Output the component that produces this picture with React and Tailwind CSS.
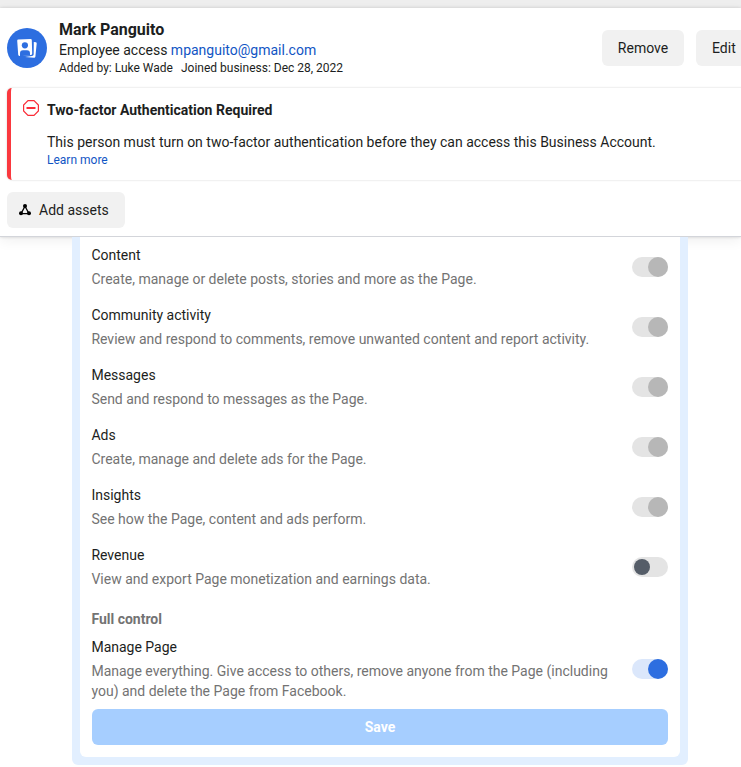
import React from "react";

const permissions = [
  ["Content", "Create, manage or delete posts, stories and more as the Page.", "locked"],
  ["Community activity", "Review and respond to comments, remove unwanted content and report activity.", "locked"],
  ["Messages", "Send and respond to messages as the Page.", "locked"],
  ["Ads", "Create, manage and delete ads for the Page.", "locked"],
  ["Insights", "See how the Page, content and ads perform.", "locked"],
  ["Revenue", "View and export Page monetization and earnings data.", "off"],
];

const tracks = {
  locked: "justify-end bg-[#e4e4e4]",
  off: "justify-start bg-[#e4e4e4] pl-0.5",
  on: "justify-end bg-[#dbe7fb]",
};
const knobs = {
  locked: "size-5 bg-[#b7b7b7]",
  off: "size-4 bg-[#555d68]",
  on: "size-5 bg-[#2d6ee0]",
};

function Toggle({ state }) {
  return (
    <button className={`flex h-5 w-9 shrink-0 items-center rounded-full ${tracks[state]}`}>
      <span className={`rounded-full ${knobs[state]}`} />
    </button>
  );
}

function Permission({ title, text, state }) {
  return (
    <div className="flex items-center justify-between">
      <div className="-ml-[0.6px] flex w-[530px] flex-col gap-1">
        <div className="text-[#1c1e21]">{title}</div>
        <div className="text-[#737373]">{text}</div>
      </div>
      <Toggle state={state} />
    </div>
  );
}

function PersonIcon() {
  return (
    <svg className="size-10 shrink-0" viewBox="0 0 40 40">
      <circle cx="20" cy="20" r="20" fill="#2d6ee0" />
      <path d="M11.2 11.6 L23.7 11 Q24.7 11 24.8 12 L25.2 25.6 Q25.2 26.8 24 26.9 L12.4 27.9 Q11.3 27.9 11.2 26.8 L10.2 12.8 Q10.2 11.7 11.2 11.6Z" fill="#fff" />
      <circle cx="17.9" cy="17.3" r="3.1" fill="#2d6ee0" />
      <path d="M13 28.2 V25.4 Q13 22.2 16 22.2 H20 Q23 22.2 23 25.2 V27.2 Z" fill="#2d6ee0" />
      <path d="M26.8 14 L29 14.3 Q29.8 14.5 29.7 15.4 L28.4 28.4 Q28.2 29.8 27 29.7 L18 29 L25 28 Q26.6 27.8 26.7 26.2Z" fill="#fff" />
    </svg>
  );
}

export default function App() {
  return (
    <div className="h-[767px] w-[741px] overflow-hidden bg-white text-sm leading-5 text-[#1c1e21] [font-family:Roboto,'Liberation_Sans',sans-serif]">
      <div className="h-2 bg-[#eeeeee]" />
      <header className="relative z-10 flex h-[229px] flex-col border-b border-[#d3d5da] bg-white shadow-[0_0_3px_rgba(0,0,0,0.16),0_4px_12px_rgba(0,0,0,0.06)]">
        <div className="flex h-20 shrink-0 items-center pl-[7px]">
          <PersonIcon />
          <div className="ml-3 w-[543px] shrink-0 pb-px">
            <h1 className="text-base leading-5 font-bold">Mark Panguito</h1>
            <p className="leading-5">
              Employee access <a className="text-[#1155c4]">mpanguito@gmail.com</a>
            </p>
            <p className="flex gap-2 text-xs leading-4">
              <span>Added by: Luke Wade</span>
              <span>Joined business: Dec 28, 2022</span>
            </p>
          </div>
          <button className="h-9 w-[82px] shrink-0 rounded-md bg-[#f1f1f1]">Remove</button>
          <button className="ml-3 h-9 w-[72px] shrink-0 rounded-md bg-[#f1f1f1] pl-4 text-left">Edit</button>
        </div>
        <section className="ml-[7px] flex h-[92px] w-[760px] shrink-0 rounded-[5px] border-l-4 border-[#fa383e] bg-white pt-3 shadow-[0_0_2px_rgba(0,0,0,0.22)]">
          <svg className="ml-3 size-4 shrink-0" viewBox="0 0 16 16" fill="none" stroke="#fa2d38">
            <path d="M5 .6H11L15.4 5V11L11 15.4H5L.6 11V5Z" strokeWidth="1.2" />
            <path d="M3.5 8H12.5" strokeWidth="2" />
          </svg>
          <div className="ml-2">
            <h2 className="leading-5 font-bold">Two-factor Authentication Required</h2>
            <p className="mt-3 leading-5">This person must turn on two-factor authentication before they can access this Business Account.</p>
            <a className="block text-xs leading-4 text-[#1155c4]">Learn more</a>
          </div>
        </section>
        <button className="mt-3 ml-[7px] flex h-9 w-[118px] shrink-0 items-center gap-2 rounded-md bg-[#f1f1f1] pl-3">
          <svg className="size-3" viewBox="0 0 12 12">
            <path d="M6 2.3 L2 9.6 H10Z" fill="none" stroke="#050505" strokeWidth="1.3" />
            <circle cx="6" cy="2" r="2" />
            <circle cx="2" cy="9.3" r="2" />
            <circle cx="10" cy="9.3" r="2" />
          </svg>
          <span>Add assets</span>
        </button>
      </header>
      <main className="relative z-20 ml-[72px] h-[528px] w-[616px] rounded-b-md bg-[#e2efff] px-2 pb-2">
        <div className="flex h-[520px] flex-col gap-4 rounded-b-md bg-white px-3 pt-2">
          {permissions.map(([title, text, state]) => (
            <Permission key={title} title={title} text={text} state={state} />
          ))}
          <section className="mt-1">
            <h3 className="-ml-[0.6px] mb-2 font-bold text-[#737373]">Full control</h3>
            <Permission
              title="Manage Page"
              text="Manage everything. Give access to others, remove anyone from the Page (including you) and delete the Page from Facebook."
              state="on"
            />
            <button className="mt-2 h-9 w-full rounded-md bg-[#a6ceff] font-bold text-white">Save</button>
          </section>
        </div>
      </main>
    </div>
  );
}
